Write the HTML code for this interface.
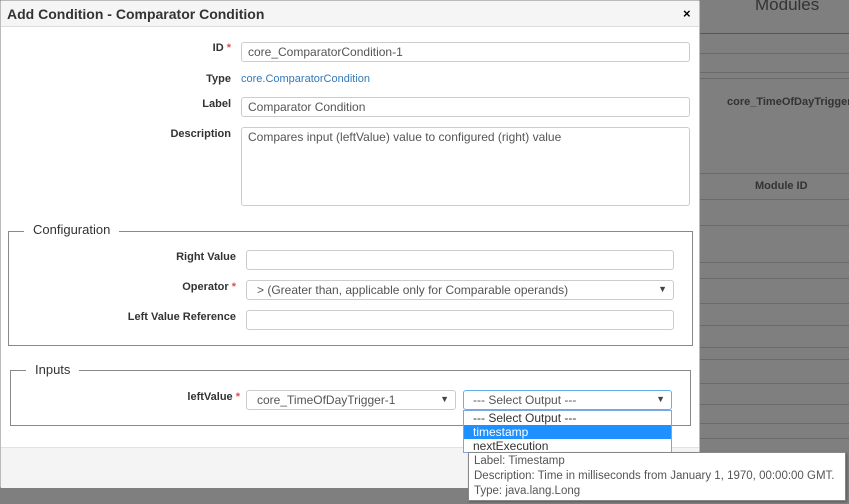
<!DOCTYPE html>
<html><head><style>
*{box-sizing:border-box;margin:0;padding:0}
body{width:849px;height:504px;overflow:hidden;background:#7f7f7f;font-family:"Liberation Sans",Arial,sans-serif;position:relative}
.a{position:absolute}
.hl{position:absolute;left:699px;right:0;height:1px;background:#6a6a6a}
.lbl{position:absolute;font-size:11px;font-weight:bold;color:#333;text-align:right}
.req{color:#d9534f}
.in{position:absolute;background:#fff;border:1px solid #ccc;border-radius:3px;font-size:12px;color:#555;padding:2px 0 0 6px;height:20px;white-space:nowrap;overflow:hidden}
.arr{position:absolute;right:6px;top:3px;font-size:9px;color:#444}
</style></head><body>
<div class="a" style="left:755px;top:-5px;font-size:17px;color:#333">Modules</div>
<div class="hl" style="top:33px;background:#555"></div>
<div class="hl" style="top:53px"></div>
<div class="hl" style="top:72px"></div>
<div class="hl" style="top:78px"></div>
<div class="a" style="left:727px;top:96px;font-size:11px;font-weight:bold;color:#333">core_TimeOfDayTrigger</div>
<div class="hl" style="top:173px"></div>
<div class="a" style="left:755px;top:180px;font-size:11px;font-weight:bold;color:#333">Module ID</div>
<div class="hl" style="top:199px"></div>
<div class="hl" style="top:225px"></div>
<div class="hl" style="top:262px"></div>
<div class="hl" style="top:278px"></div>
<div class="hl" style="top:303px"></div>
<div class="hl" style="top:325px"></div>
<div class="hl" style="top:347px"></div>
<div class="hl" style="top:359px"></div>
<div class="hl" style="top:383px"></div>
<div class="hl" style="top:404px"></div>
<div class="hl" style="top:423px"></div>
<div class="hl" style="top:438px"></div>

<div class="a" style="left:0;top:0;width:700px;height:488px;background:#fff;border:1px solid #bbb;border-radius:2px">
 <div class="a" style="left:0;top:0;width:698px;height:26px;background:#f5f5f5;border-bottom:1px solid #ddd"></div>
 <div class="a" style="left:6px;top:5px;font-size:14px;font-weight:bold;color:#333">Add Condition - Comparator Condition</div>
 <div class="a" style="left:682px;top:5px;font-size:13px;font-weight:bold;color:#000">×</div>
 <div class="a" style="left:0;top:446px;width:698px;height:41px;background:#f4f4f4;border-top:1px solid #e2e2e2"></div>
</div>

<div class="lbl" style="left:100px;width:131px;top:42px">ID <span class="req">*</span></div>
<div class="in" style="left:241px;top:42px;width:449px">core_ComparatorCondition-1</div>
<div class="lbl" style="left:100px;width:131px;top:73px">Type</div>
<div class="a" style="left:241px;top:73px;font-size:11px;color:#337ab7">core.ComparatorCondition</div>
<div class="lbl" style="left:100px;width:131px;top:98px">Label</div>
<div class="in" style="left:241px;top:97px;width:449px">Comparator Condition</div>
<div class="lbl" style="left:100px;width:131px;top:128px">Description</div>
<div class="in" style="left:241px;top:127px;width:449px;height:79px">Compares input (leftValue) value to configured (right) value</div>

<div class="a" style="left:8px;top:231px;width:685px;height:115px;border:1px solid #888"></div>
<div class="a" style="left:24px;top:222px;padding:0 9px;background:#fff;font-size:13px;color:#333">Configuration</div>
<div class="lbl" style="left:80px;width:156px;top:251px">Right Value</div>
<div class="in" style="left:246px;top:250px;width:428px"></div>
<div class="lbl" style="left:80px;width:156px;top:281px">Operator <span class="req">*</span></div>
<div class="in" style="left:246px;top:280px;width:428px;padding-left:10px">&gt; (Greater than, applicable only for Comparable operands)<span class="arr">▼</span></div>
<div class="lbl" style="left:80px;width:156px;top:311px">Left Value Reference</div>
<div class="in" style="left:246px;top:310px;width:428px"></div>

<div class="a" style="left:10px;top:370px;width:681px;height:56px;border:1px solid #888"></div>
<div class="a" style="left:26px;top:362px;padding:0 9px;background:#fff;font-size:13px;color:#333">Inputs</div>
<div class="lbl" style="left:80px;width:160px;top:391px">leftValue <span class="req">*</span></div>
<div class="in" style="left:246px;top:390px;width:210px;padding-left:10px">core_TimeOfDayTrigger-1<span class="arr">▼</span></div>
<div class="in" style="left:463px;top:390px;width:209px;border-color:#66afe9;padding-left:9px">--- Select Output ---<span class="arr">▼</span></div>
<div class="a" style="left:463px;top:410px;width:209px;height:43px;background:#fff;border:1px solid #7aa7e0;font-size:12px;color:#333">
 <div style="padding-left:9px;height:14px;line-height:14px">--- Select Output ---</div>
 <div style="padding-left:9px;height:14px;line-height:14px;background:#1e90ff;color:#fff">timestamp</div>
 <div style="padding-left:9px;height:14px;line-height:14px">nextExecution</div>
</div>
<div class="a" style="left:468px;top:452px;width:378px;height:49px;background:#fff;border:1px solid #888;box-shadow:1px 1px 2px rgba(0,0,0,.3);font-size:11.5px;color:#555;padding:1px 5px;line-height:15px">
Label: Timestamp<br>Description: Time in milliseconds from January 1, 1970, 00:00:00 GMT.<br>Type: java.lang.Long
</div>
</body></html>
